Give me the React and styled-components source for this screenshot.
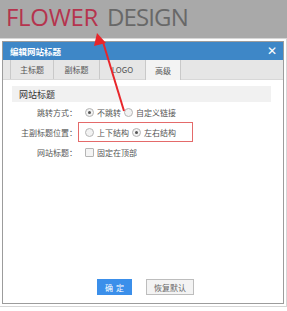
import React from 'react';
import styled, { createGlobalStyle } from 'styled-components';

const GlobalStyle = createGlobalStyle`
    html, body {
        margin: 0;
        padding: 0;
        background: #ffffff;
    }
    body {
        font-family: "Noto Sans CJK SC", "Noto Sans", sans-serif;
    }
`;

const Page = styled.div`
    position: relative;
    width: 287px;
    height: 311px;
    overflow: hidden;
    background: #ffffff;
`;

const Banner = styled.div`
    height: 41px;
    background: #a9a9a9;
    display: flex;
    align-items: center;
    padding-left: 6px;
    font-family: "Open Sans", sans-serif;
    font-size: 24px;
    line-height: 1;
    > span {
        margin-top: -7px;
    }
`;

const Word = styled.span`
    color: ${p => p.color};
    margin-right: ${p => p.gap || 0}px;
    letter-spacing: ${p => p.track || 0}px;
`;

const Dialog = styled.div`
    margin-left: 2px;
    width: 280px;
    height: 261px;
    border: 1px solid #9c9c9c;
    box-shadow: 0 0 0 2px #ffffff, 0 0 0 3px #d6d6d6;
    display: flex;
    flex-direction: column;
    background: #ffffff;
`;

const TitleBar = styled.div`
    height: 18px;
    background: #3e87c7;
    display: flex;
    align-items: center;
    justify-content: space-between;
    padding: 0 6px 0 7px;
    color: #ffffff;
    font-size: 8.5px;
    font-weight: bold;
`;

const Close = styled.span`
    font-family: "DejaVu Sans", sans-serif;
    font-size: 12px;
    font-weight: bold;
    line-height: 1;
`;

const TabBar = styled.div`
    height: 19px;
    background: #e6e6e6;
    border-bottom: 1px solid #d8d8d8;
    display: flex;
    padding-left: 7px;
`;

const Tab = styled.div`
    width: ${p => p.w}px;
    display: flex;
    align-items: center;
    justify-content: center;
    font-size: 8px;
    color: #555555;
    border-left: 1px solid #c9c9c9;
    border-right: ${p => (p.last ? '1px solid #c9c9c9' : 'none')};
    background: ${p => (p.active ? '#f3f3f3' : 'transparent')};
    margin-bottom: ${p => (p.active ? '-1px' : '0')};
`;

const Body = styled.div`
    flex: 1;
    padding: 6px 12px 0 9px;
    display: flex;
    flex-direction: column;
`;

const Section = styled.div`
    height: 16px;
    background: #f1f1f1;
    display: flex;
    align-items: center;
    padding-left: 7px;
    font-size: 9px;
    color: #333333;
`;

const Rows = styled.div`
    display: flex;
    flex-direction: column;
    margin-left: -9px;
`;

const Row = styled.div`
    height: 20px;
    display: flex;
    align-items: center;
`;

const Label = styled.div`
    width: 74px;
    text-align: right;
    font-size: 8px;
    color: #555555;
    white-space: nowrap;
`;

const Options = styled.div`
    display: flex;
    align-items: center;
    height: 20px;
    margin-left: 1px;
    padding-left: ${p => (p.marked ? 6 : 7)}px;
    width: ${p => (p.marked ? '115px' : 'auto')};
    box-sizing: border-box;
    border: ${p => (p.marked ? '1px solid #e46a6a' : 'none')};
`;

const Radio = styled.span`
    width: 7px;
    height: 7px;
    border-radius: 50%;
    border: 1px solid #b5b5b5;
    background: #f2f2f2;
    display: flex;
    align-items: center;
    justify-content: center;
    margin-right: 3px;
    &::after {
        content: '';
        width: 3px;
        height: 3px;
        border-radius: 50%;
        background: ${p => (p.on ? '#555555' : 'transparent')};
    }
`;

const Check = styled.span`
    width: 7px;
    height: 7px;
    border: 1px solid #b5b5b5;
    border-radius: 1px;
    background: #f4f4f4;
    margin-right: 3px;
`;

const OptText = styled.span`
    font-size: 8px;
    color: #555555;
    margin-right: 3px;
    white-space: nowrap;
`;

const Footer = styled.div`
    display: flex;
    justify-content: center;
    gap: 14px;
    padding: 0 0 8px 5px;
`;

const Button = styled.div`
    height: 16px;
    width: ${p => p.w}px;
    box-sizing: border-box;
    display: flex;
    align-items: center;
    justify-content: center;
    font-size: 8px;
    ${p => (p.primary
        ? 'background: #3b8fea; color: #ffffff; letter-spacing: 3px; padding-left: 3px;'
        : 'background: #f3f3f3; color: #666666; border: 1px solid #bdbdbd;')}
`;

const Arrow = styled.svg`
    position: absolute;
    left: 0;
    top: 0;
    pointer-events: none;
`;

export default function App() {
    return (
        <Page>
            <GlobalStyle />
            <Banner>
                <span>
                    <Word color="#b5344e" gap={9} track={-0.3}>FLOWER</Word>
                    <Word color="#686868" track={-0.9}>DESIGN</Word>
                </span>
            </Banner>
            <Dialog>
                <TitleBar>
                    <span>编辑网站标题</span>
                    <Close>✕</Close>
                </TitleBar>
                <TabBar>
                    <Tab w={42}>主标题</Tab>
                    <Tab w={45}>副标题</Tab>
                    <Tab w={45}>LOGO</Tab>
                    <Tab w={34} active last>高级</Tab>
                </TabBar>
                <Body>
                    <Section>网站标题</Section>
                    <Rows>
                        <Row>
                            <Label>跳转方式：</Label>
                            <Options>
                                <Radio on />
                                <OptText>不跳转</OptText>
                                <Radio />
                                <OptText>自定义链接</OptText>
                            </Options>
                        </Row>
                        <Row>
                            <Label>主副标题位置：</Label>
                            <Options marked>
                                <Radio />
                                <OptText>上下结构</OptText>
                                <Radio on />
                                <OptText>左右结构</OptText>
                            </Options>
                        </Row>
                        <Row>
                            <Label>网站标题：</Label>
                            <Options>
                                <Check />
                                <OptText>固定在顶部</OptText>
                            </Options>
                        </Row>
                    </Rows>
                </Body>
                <Footer>
                    <Button primary w={35}>确定</Button>
                    <Button w={48}>恢复默认</Button>
                </Footer>
            </Dialog>
            <Arrow width="287" height="311" viewBox="0 0 287 311">
                <line x1="103" y1="42" x2="124" y2="111" stroke="#e8262b" strokeWidth="2" />
                <polygon points="97,33 94,46 106,43" fill="#e8262b" />
            </Arrow>
        </Page>
    );
}
